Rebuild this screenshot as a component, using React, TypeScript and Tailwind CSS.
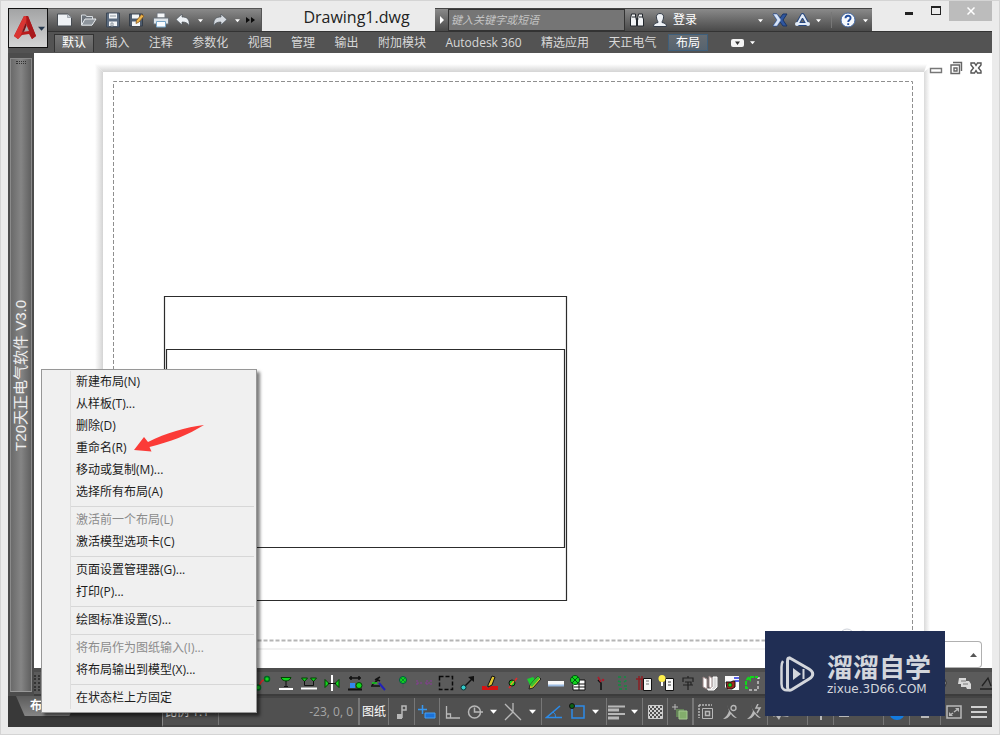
import React from 'react';

type Draw = { w?: number; h?: number; children: React.ReactNode; vb?: string };

function Svg({ w = 18, h = 18, vb, children }: Draw) {
  return (
    <svg width={w} height={h} viewBox={vb ?? `0 0 ${w} ${h}`} fill="none" className="block shrink-0" aria-hidden="true">
      {children}
    </svg>
  );
}

function Caret({ color = '#fff', size = 6 }: { color?: string; size?: number }) {
  return (
    <svg width={size} height={size} viewBox="0 0 6 6" className="block shrink-0" aria-hidden="true">
      <path d="M0 1.500h6L3 5z" fill={color} />
    </svg>
  );
}

const quick: { name: string; art: React.ReactNode }[] = [
  {
    name: '新建',
    art: (
      <>
        <path d="M1.500 3h10l4 3.500V15h-14z" fill="#eef1f4" stroke="#474c52" />
        <path d="M11.500 3v3.500h4" fill="#c5cbd2" stroke="#8a9098" strokeWidth=".7" />
      </>
    ),
  },
  {
    name: '打开',
    art: (
      <>
        <path d="M1.500 14V4h4l1 1.500h6V8" fill="#6c737b" stroke="#d8dde2" />
        <path d="M1.500 14.200 5 8h11l-4 6.200z" fill="#8e959c" stroke="#e7ebee" />
      </>
    ),
  },
  {
    name: '保存',
    art: (
      <>
        <path d="M2.500 2h13v14h-13z" fill="#5c6c80" stroke="#3c4754" />
        <path d="M5 2.500h8v5H5zM5 10.500h8V15H5z" fill="#f3f5f7" />
        <path d="M6 5h6M7 12h2v3H7z" stroke="#8c96a0" />
      </>
    ),
  },
  {
    name: '另存为',
    art: (
      <>
        <path d="M1.500 3h13v12h-13z" fill="#4e5c6e" stroke="#343d48" />
        <path d="M4 3.500h7v4H4zM4 10.500h8V15H4z" fill="#f3f5f7" />
        <path d="m8.500 9.500 5-6 2.500 1.500-5 6-3 1.500z" fill="#efb64b" stroke="#8c5b20" strokeWidth=".8" />
      </>
    ),
  },
  {
    name: '打印',
    art: (
      <>
        <path d="M5 2h8v5H5z" fill="#f6f8fa" stroke="#70777e" />
        <path d="M1.500 7h15v6h-15z" fill="#dfe5ea" stroke="#6b737b" />
        <path d="M4.500 10.500h9V16h-9z" fill="#fafcff" stroke="#77a5c7" />
      </>
    ),
  },
];

function AppMark() {
  return (
    <Svg w={24} h={28}>
      <path d="M11 2 1 22l4 3 4-4 7-1 3 5 4-3L15 2z" fill="#b91d1d" />
      <path d="M11 2h3l-1 6-6 15-2 2-4-3z" fill="#d93532" />
      <path d="M12.500 9 9 18l7-1z" fill="#a9a9aa" />
      <path d="M12.500 9 9 18l2-.3 2.500-6z" fill="#7c1013" />
      <path d="m13 2 4.500 20L19 25l4-3L15 2z" fill="#a8191c" />
    </Svg>
  );
}

const tabs = ['默认', '插入', '注释', '参数化', '视图', '管理', '输出', '附加模块', 'Autodesk 360', '精选应用', '天正电气', '布局'];

function Header() {
  return (
    <header className="flex bg-[#ebebeb]">
      <div className="flex flex-col pt-[7px]">
        <button aria-label="应用程序菜单" className="flex h-10 w-10 items-center justify-between border border-[#111] bg-linear-to-b from-[#a3a4a5] to-[#d4d4d4] pr-[2px] pl-1">
          <AppMark />
          <Caret color="#26384d" size={7} />
        </button>
        <div className="flex-1 bg-[#535353]" />
      </div>
      <div className="flex min-w-0 flex-1 flex-col">
        <div className="flex h-[30px] items-end">
          <div className="flex h-[23px] w-[214px] items-center gap-[6px] border-t border-r border-[#555] bg-linear-to-b from-[#8a8a8a] to-[#4a4a4a] pl-2">
            {quick.map((q) => (
              <button key={q.name} aria-label={q.name}>
                <Svg>{q.art}</Svg>
              </button>
            ))}
            <button aria-label="放弃" className="flex items-center gap-2">
              <Svg w={14} h={14}>
                <path d="M6 1v3c5 0 8 2 7 9-1-3-3-4-7-4v3L0 6.500z" fill="#edf1f5" stroke="#4d545c" strokeWidth=".7" />
              </Svg>
              <Caret size={5} />
            </button>
            <button aria-label="重做" className="ml-1 flex items-center gap-2">
              <Svg w={14} h={14}>
                <path d="M8 1v3C3 4 0 6 1 13c1-3 3-4 7-4v3l6-5.500z" fill="#d5dae0" stroke="#4d545c" strokeWidth=".7" />
              </Svg>
              <Caret size={5} />
            </button>
            <button aria-label="更多">
              <Svg w={9} h={8}>
                <path d="m0 1 4 3-4 3zM5 1l4 3-4 3z" fill="#0b0b0b" />
              </Svg>
            </button>
          </div>
          <h1 className="flex-1 pb-1 pl-4 text-center text-[16px] leading-5 text-[#222]">Drawing1.dwg</h1>
          <div className="flex h-[23px] w-[437px] border-t border-[#444] bg-linear-to-b from-[#8a8a8a] to-[#4a4a4a]">
            <button aria-label="展开搜索" className="flex w-[13px] items-center justify-center">
              <Svg w={4} h={8}>
                <path d="m0 0 4 4-4 4z" fill="#fff" />
              </Svg>
            </button>
            <input
              aria-label="搜索"
              placeholder="键入关键字或短语"
              className="w-[177px] border border-[#333] bg-[#757575] pl-[2px] text-[11px] italic text-white outline-none placeholder:text-[#c4c4c4]"
            />
            <button aria-label="查找" className="ml-1">
              <Svg w={16} h={16}>
                <path d="M2.500 2h4v3l1 2v7h-6V7zM9.500 2h4v3l1 2v7h-6V7z" fill="#f2f4f6" stroke="#22272d" />
                <path d="M6.500 7h3M3 5h3M10 5h3" stroke="#22272d" strokeWidth="1.200" />
              </Svg>
            </button>
            <button aria-label="登录" className="ml-[7px] flex items-center gap-[5px] text-[12px] text-white">
              <Svg w={16} h={16}>
                <path d="M8 1.500c3 0 4 2 3.500 4.500S10 9 10 10.500c3 .5 4.500 1.500 4.500 4h-13c0-2.500 1.500-3.500 4.500-4 0-1.500-1-2-1.500-4.500S5 1.500 8 1.500z" fill="#eef1f5" stroke="#363f4b" />
              </Svg>
              登录
            </button>
            <div className="ml-auto flex items-center">
              <Caret size={5} />
              <button aria-label="Exchange" className="ml-2">
                <Svg w={18} h={16}>
                  <path d="M2 2h4l3 4 3-4h4l-4 6 4 6h-4l-3-4-3 4H2l4-6z" fill="#2f569f" stroke="#1a3566" />
                  <path d="M2 2h4l4 6-4 6H2l4-6z" fill="#d7e4f8" stroke="#5474ab" strokeWidth=".6" />
                </Svg>
              </button>
              <button aria-label="Autodesk 360" className="ml-[5px]">
                <Svg w={17} h={16}>
                  <path d="m8.500 3 5 9h-10z" stroke="#27477f" strokeWidth="4" strokeLinejoin="round" />
                  <path d="m8.500 3 5 9h-10z" stroke="#e2ebf7" strokeWidth="2" strokeLinejoin="round" />
                  <circle cx="3" cy="12" r="2" fill="#e2ebf7" />
                  <circle cx="14" cy="12" r="2" fill="#e2ebf7" />
                </Svg>
              </button>
              <span className="ml-[5px]"><Caret size={5} /></span>
              <span className="ml-[10px] h-4 w-px bg-[#777]" />
              <button aria-label="帮助" className="ml-2">
                <Svg w={16} h={16}>
                  <circle cx="8" cy="8" r="7" fill="#f7f9fc" stroke="#41659f" />
                  <path d="M5.500 6.300C5.500 3 10.600 3 10.600 6c0 2-2.400 2-2.400 4M8.200 11.200v1.800" stroke="#244f9e" strokeWidth="1.900" />
                </Svg>
              </button>
              <span className="mr-1 ml-[7px]"><Caret size={5} /></span>
            </div>
          </div>
          <div className="flex self-start pl-[33px]">
            <button aria-label="最小化" className="flex h-[19px] w-[22px] items-end pb-[5px]">
              <span className="h-[3px] w-2 bg-[#222]" />
            </button>
            <button aria-label="最大化" className="flex h-[19px] w-[22px] items-center pl-1">
              <span className="h-[9px] w-[10px] border border-t-2 border-[#222]" />
            </button>
            <button aria-label="关闭" className="flex h-5 w-[43px] items-center justify-center bg-[#bcbcbc]">
              <Svg w={8} h={8}>
                <path d="m.5.5 7 7m0-7-7 7" stroke="#fff" strokeWidth="1.500" />
              </Svg>
            </button>
          </div>
        </div>
        <nav className="flex h-[22px] items-center border-t border-[#333] bg-[#535353] pl-[6px]">
          <div className="flex w-[654px] items-center justify-between">
            {tabs.map((t) => (
              <button
                key={t}
                className={
                  t === '默认'
                    ? 'h-[18px] border border-b-0 border-[#333] bg-linear-to-b from-[#767676] to-[#5e5e5e] px-[7px] text-[12px] leading-4 whitespace-nowrap text-white'
                    : t === '布局'
                      ? 'h-[17px] border border-[#3f5f7b] bg-linear-to-b from-[#666c72] to-[#56636f] px-[7px] text-[12px] leading-4 whitespace-nowrap text-white'
                      : 'h-[18px] px-2 text-[12px] leading-[18px] whitespace-nowrap text-[#d8d8d8]'
                }
              >
                {t}
              </button>
            ))}
          </div>
          <button aria-label="功能区显示" className="ml-[23px] flex items-center gap-[6px]">
            <Svg w={13} h={8}>
              <rect width="13" height="8" rx="2" fill="#f4f4f4" />
              <path d="M4 2.500h5L6.500 6z" fill="#333" />
            </Svg>
            <Caret size={5} />
          </button>
        </nav>
      </div>
    </header>
  );
}

function Palette() {
  return (
    <aside className="flex w-[26px] shrink-0 flex-col items-center bg-[#4c4c4c] px-[2px] pt-[5px] pb-1">
      <div className="flex w-full flex-1 flex-col items-center border border-[#8a8a8a] border-b-[#999] bg-linear-to-r from-[#6a6a6a] via-[#858585] to-[#606060]">
        <div className="mt-[2px] h-[3px] w-[10px] border-y border-dotted border-[#333]" />
        <div className="mt-[236px] rotate-180 font-['Liberation_Sans','Noto_Sans_CJK_SC',sans-serif] text-[15px] leading-5 whitespace-nowrap text-[#ededed] [text-orientation:sideways] [writing-mode:vertical-rl]">
          T20天正电气软件 V3.0
        </div>
      </div>
    </aside>
  );
}

function Canvas() {
  return (
    <main className="relative min-h-[615px] flex-1 overflow-hidden bg-white">
      <svg className="absolute inset-0 h-full w-full" fill="none" aria-label="布局图纸">
        <defs>
          <linearGradient id="top" x2="0" y2="1">
            <stop stopColor="#fff" />
            <stop offset="1" stopColor="#d4d4d4" />
          </linearGradient>
          <linearGradient id="left">
            <stop stopColor="#fff" />
            <stop offset="1" stopColor="#d4d4d4" />
          </linearGradient>
          <linearGradient id="right">
            <stop stopColor="#dadada" />
            <stop offset="1" stopColor="#fff" />
          </linearGradient>
        </defs>
        <path d="M61 11h832l-3 8H69z" fill="url(#top)" />
        <path d="M61 11l8 8v572l-8 5z" fill="url(#left)" />
        <path d="M890 19l6-5v576l-6 5z" fill="url(#right)" />
        <path d="M69 596h821" stroke="#f1f1f1" strokeWidth="2" />
        <path d="M79.500 587V28.500h799V587" stroke="#8f8f8f" strokeDasharray="4 2" />
        <path d="M79.500 587.500h799" stroke="#b5b5b5" strokeWidth="2" strokeDasharray="4 2" />
        <path d="M130.500 243.500h402v304h-402zM132.500 296.500h398v198h-398z" stroke="#2c2c2c" strokeWidth="1.200" />
        <circle cx="813" cy="583" r="7" stroke="#ccd0d8" />
        <circle cx="829" cy="585" r="7" stroke="#ccd0d8" />
      </svg>
      <div className="absolute top-2 right-[9px] flex items-center gap-[6px]">
        <button aria-label="最小化图形">
          <Svg w={14} h={14}>
            <path d="M1.500 7.500h11v4h-11z" fill="#fff" stroke="#777" strokeWidth="1.400" />
          </Svg>
        </button>
        <button aria-label="还原图形">
          <Svg w={14} h={14}>
            <path d="M4 1.500h8.500V10M2 4h8.500v8.500H2z" stroke="#666" strokeWidth="1.400" />
            <path d="M5 7h3v3H5z" stroke="#666" strokeWidth="1.400" />
          </Svg>
        </button>
        <button aria-label="关闭图形">
          <Svg w={14} h={14}>
            <path d="M2 2h3.500L7 4.500 8.500 2H12v2L9.500 7l2.500 3v2H8.500L7 9.500 5.500 12H2v-2l2.500-3L2 4z" fill="#fff" stroke="#555" strokeWidth="1.400" />
          </Svg>
        </button>
      </div>
      <div className="absolute right-[10px] bottom-0 left-[180px] flex h-[27px] items-center justify-end">
        <input aria-label="命令行" className="h-full flex-1 outline-none" />
        <div className="flex h-full w-14 items-center justify-end rounded-r-sm border border-l-0 border-[#b0b0b0] pr-1">
          <button aria-label="命令历史">
            <Svg w={7} h={4}>
              <path d="M0 4h7L3.500 0z" fill="#555" />
            </Svg>
          </button>
        </div>
      </div>
    </main>
  );
}

const G = '#12d61d';
const toolsA: React.ReactNode[] = [
  <>
    <path d="M5 12Q7 6 12 5" stroke="#d82020" strokeWidth="1.500" />
    <circle cx="4" cy="13.500" r="2.500" fill={G} stroke="#062" strokeWidth="1.500" />
    <circle cx="13" cy="5" r="2.500" fill={G} stroke="#062" strokeWidth="1.500" />
  </>,
  <>
    <path d="M4 3.500h10c-1 3-3 3-5 3.500-2-.5-4-.5-5-3.500z" fill={G} stroke="#040" />
    <path d="M9 7v5.500M7 12.500h4" stroke="#111" />
    <path d="M2 15h14" stroke="#fff" strokeWidth="2" />
  </>,
  <>
    <path d="M1.500 4h6L4.500 7.500zM10.500 4h6l-3 3.500z" fill={G} stroke="#040" />
    <path d="M4.500 7v4.500h9V7" stroke="#111" />
    <path d="M1 14.500h16" stroke="#fff" strokeWidth="2" />
  </>,
  <>
    <path d="M9 1v16" stroke="#fff" strokeWidth="2" />
    <path d="M2 5.500v8l4-4zM16 5.500v8l-4-4z" fill={G} stroke="#040" />
    <path d="M5 9.500h8" stroke="#111" />
  </>,
  <>
    <path d="M3 4h12M5 2v4m8-4v4" stroke="#111" strokeWidth="1.500" />
    <path d="M4 9h5v5H4z" fill="#38e" />
    <circle cx="13" cy="11.500" r="3" fill={G} stroke="#040" />
    <path d="M2 15.500h14" stroke="#111" strokeWidth="2" />
  </>,
  <>
    <path d="M2 12h9M3 11l6-5 2 1M6 6l5-3" stroke="#111" strokeWidth="1.500" />
    <path d="M3 9h5" stroke={G} strokeWidth="1.500" />
    <path d="m10 9 6 7" stroke="#2222b8" strokeWidth="2" />
  </>,
];

const toolsB: React.ReactNode[] = [
  <>
    <circle cx="10" cy="6" r="3.500" fill={G} stroke="#054" />
    <path d="m8 4 4 4m0-4-4 4" stroke="#063" strokeWidth=".7" />
    <path d="M10 10v4" stroke="#555" />
  </>,
  <path d="M2 6v6m0-3h5m3 0h6m-4-3v6m4-6v6" stroke="#8a3a98" strokeDasharray="2 1" />,
  <path d="M2.500 2.500h13v13h-13z" stroke="#090909" strokeWidth="1.500" strokeDasharray="4 2" />,
  <>
    <path d="M5 13 14 4" stroke="#111" strokeWidth="1.500" />
    <path d="M15 2v6l-6-5z" fill="#111" />
    <circle cx="4.500" cy="13.500" r="2.500" fill="#3cc" stroke="#133" />
  </>,
  <>
    <path d="M1 12h4l2 2 3-2h7v4H1z" fill="#d61212" />
    <path d="m7 11 4-9 3 1-3 8-4 2z" fill="#dfc42f" stroke="#111" />
  </>,
  <>
    <path d="M6 14 14 4" stroke="#e52a2a" strokeWidth="1.500" />
    <circle cx="9" cy="9" r="3" stroke="#111" fill={G} />
    <path d="M7.500 11 11 7" stroke="#e5a02a" strokeWidth="1.500" />
  </>,
  <>
    <path d="m2 5 6-2 4 5-6 5z" fill="#1bd030" />
    <path d="m4 15 1-4 8-9 3 3-8 9z" fill="#d8c626" stroke="#222" />
    <path d="m5 11 8-9 2 2-8 9z" fill="#39c431" />
  </>,
  <>
    <path d="M1 7h16v5H1z" fill="#f8f8f8" />
    <path d="M1 11.500h16" stroke="#9cbbe0" strokeWidth="2" />
  </>,
  <>
    <path d="M5 6h11v10H4v-5" fill="#fff" stroke="#111" />
    <path d="M5 10h11M5 13h11M10 7v9" stroke="#111" />
    <circle cx="6" cy="6" r="4.500" fill={G} stroke="#051" />
    <path d="m3 3 6 6m0-6L3 9" stroke="#051" />
  </>,
  <>
    <path d="M10 16V9l-3-3" stroke="#111" strokeWidth="1.500" />
    <path d="m7 3 3 5" stroke="#ac1d2d" strokeWidth="1.500" />
    <circle cx="12" cy="6" r="1.300" fill="#ac1d2d" />
  </>,
  <path d="M5 3h4m2 0h2M5 7l3 1m3 0 3-2M5 11h4m2 1h3M6 15h3m3 0h2" stroke="#138b42" strokeWidth="1.500" strokeDasharray="3 1" />,
  <>
    <path d="M1 5h7M4 2v14M7 2v14" stroke="#8c1f25" strokeWidth="1.500" />
    <path d="M8.500 4.500h8v12h-8z" fill="#f7f7f7" stroke="#111" />
    <path d="M11 7h3M11 10h3" stroke="#777" />
  </>,
  <>
    <path d="M8.500 4.500h8v12h-8z" fill="#f7f7f7" stroke="#111" />
    <path d="M11 8h3M11 11h3" stroke="#777" strokeWidth="1.500" />
    <circle cx="5" cy="4.500" r="3.500" fill="#ffef4b" />
    <path d="M4 8h2v4H4z" fill="#fff" />
  </>,
  <path d="M9 2v2M4 8V4h10v4M6 8h6v3H4m0 0h10M9 8v8" stroke="#222" strokeWidth="1.200" />,
  <>
    <path d="m2 3 4 2v10l-4-2zM8 2l3 2v11l-3-2z" fill="#fff" stroke="#9b8585" />
    <path d="M6 15h4l2-2V3h4v10l-3 3H7" fill="#dadada" stroke="#fff" />
  </>,
  <>
    <path d="M2 2h14v14H5l-3-3z" fill="#fafafa" />
    <path d="M3 8h5l2-1h2v6l-3 2H4z" fill="#a3261e" stroke="#111" />
    <circle cx="7" cy="11" r="2" fill={G} stroke="#111" strokeWidth=".5" />
    <path d="M11 4h5m-4 3h4" stroke="#2630e0" strokeWidth="1.500" />
  </>,
  <>
    <path d="M3 14H1V7l3-4h9" stroke={G} strokeWidth="2" strokeDasharray="4 1" />
    <path d="M4 16h9V4h3" stroke="#fff" strokeDasharray="3 2" />
    <path d="m3 5 3-3v6z" fill={G} />
  </>,
];

function Tools({ items, gap, name }: { items: React.ReactNode[]; gap: boolean; name: string }) {
  return (
    <div className={gap ? 'flex gap-[5px]' : 'flex gap-1'}>
      {items.map((art, i) => (
        <button key={i} aria-label={`${name} ${i + 1}`}>
          <Svg>{art}</Svg>
        </button>
      ))}
    </div>
  );
}

function Toolbar() {
  return (
    <div className="flex h-[28px] items-center overflow-hidden border-t-4 border-b-2 border-t-[#4d4d4d] border-b-[#3c3c3c] bg-[#5b5b5b]">
      <div className="h-4 w-[6px] shrink-0 border-x-2 border-dotted border-[#333]" />
      <div className="ml-[214px]">
        <Tools items={toolsA} gap name="导线" />
      </div>
      <div className="ml-[6px]">
        <Tools items={toolsB} gap={false} name="设备" />
      </div>
      <div className="ml-auto flex items-center gap-2">
        <Svg w={14} h={16}>
          <circle cx="6" cy="8" r="6" fill="#fff" stroke="#222" />
        </Svg>
        <Svg w={16} h={16}>
          <path d="M3 3h7v3h3l2 3v5h-4l-1-2H5V9H2z" fill="#d8d8d8" />
          <path d="M5 6h5M7 9h5" stroke="#777" />
        </Svg>
        <Svg w={12} h={16}>
          <path d="M2 11 8 3l3 8M0 14h12" stroke="#222" strokeWidth="1.300" />
        </Svg>
      </div>
    </div>
  );
}

function Cell({ children, className }: { children: React.ReactNode; className: string }) {
  return <div className={`flex items-center border-r border-[#777] ${className}`}>{children}</div>;
}

const grey = '#b8b8b8';

function StatusBar() {
  return (
    <footer className="flex h-[31px] shrink-0 bg-[#393939]">
      <div className="flex w-[154px] shrink-0 items-start pl-2">
        <button className="h-5 w-[62px] bg-linear-to-b from-[#5c5c5c] to-[#858585] pl-[14px] text-left text-[12px] leading-5 font-bold whitespace-nowrap text-white [clip-path:polygon(0_0,100%_0,86%_100%,14%_100%)]">
          布局1
        </button>
      </div>
      <div className="flex min-w-0 flex-1 overflow-hidden border-y-2 border-l border-[#444] border-l-[#888] bg-[#505050] text-[12px] text-[#eee]">
        <Cell className="w-14 shrink-0 gap-1 pl-[2px] whitespace-nowrap">比例 1:1 <Caret size={5} /></Cell>
        <Cell className="min-w-0 flex-1 justify-end pr-[5px] whitespace-nowrap text-[#a6a6a6]">-23, 0, 0</Cell>
        <Cell className="w-[30px] shrink-0 justify-center border-l text-white">
          <button className="whitespace-nowrap">图纸</button>
        </Cell>
        <Cell className="w-[26px] shrink-0 justify-center">
          <Svg w={12} h={16}>
            <path d="M1 10h5v5H1z" fill={grey} />
            <path d="M6 14V2h4v4H6" stroke={grey} strokeWidth="1.500" />
          </Svg>
        </Cell>
        <Cell className="w-[25px] shrink-0 justify-center">
          <Svg w={18} h={16}>
            <path d="M4.500 1v9M0 5.500h9" stroke="#3696ee" strokeWidth="1.500" />
            <path d="M7 9h10v5H7z" fill="#1c72d8" stroke="#45a0f5" />
          </Svg>
        </Cell>
        <Cell className="w-[102px] shrink-0 justify-between pr-[5px] pl-[5px]">
          <Svg w={15} h={16}>
            <path d="M1.500 2v12H15M1.500 10h4v4" stroke={grey} strokeWidth="1.300" />
          </Svg>
          <Svg w={16} h={16}>
            <circle cx="7.500" cy="8" r="6" stroke={grey} strokeWidth="1.500" />
            <path d="M7.500 3.500V8H16" stroke={grey} strokeWidth="1.500" />
          </Svg>
          <Caret size={7} />
          <Svg w={18} h={18}>
            <path d="m1 1 16 16M9 0v9M9 9l-8 8" stroke={grey} strokeWidth="1.300" />
          </Svg>
          <Caret size={7} />
        </Cell>
        <Cell className="w-[65px] shrink-0 justify-between pr-[7px] pl-[3px]">
          <Svg w={17} h={16}>
            <path d="M15 2 1.500 13.500H17" stroke="#2c8be8" strokeWidth="1.600" />
            <path d="M8 8q3 2 2.500 5" stroke="#2c8be8" />
          </Svg>
          <Svg w={17} h={17}>
            <path d="M3 3h12v12H3z" stroke="#2c8be8" strokeWidth="1.500" />
            <circle cx="3" cy="3" r="2.500" fill="#0b6314" stroke="#111" />
          </Svg>
          <Caret size={7} />
        </Cell>
        <Cell className="w-9 shrink-0 justify-between pr-1 pl-px">
          <Svg w={17} h={16}>
            <path d="M0 2.500h17M0 10h17" stroke={grey} strokeWidth="2" />
            <path d="M0 6h11M0 14h11" stroke={grey} strokeWidth="3" />
          </Svg>
          <Caret size={7} />
        </Cell>
        <Cell className="w-[25px] shrink-0 justify-center">
          <Svg w={15} h={16}>
            <defs>
              <pattern id="chk" width="4" height="4" patternUnits="userSpaceOnUse">
                <path d="M0 0h2v2H0zM2 2h2v2H2z" fill="#d0d0d0" />
              </pattern>
            </defs>
            <path d="M.5 1.500h14v13H.5z" fill="url(#chk)" stroke="#ccc" />
          </Svg>
        </Cell>
        <Cell className="w-[25px] shrink-0 justify-center">
          <Svg w={16} h={16}>
            <path d="M3 0v6M0 3h6" stroke={grey} />
            <path d="M4 5h8v8H4z" fill="#648458" />
            <path d="M7 7h8v8H7z" fill="#83ad6c" stroke="#a5c990" />
          </Svg>
        </Cell>
        <Cell className="w-[75px] shrink-0 justify-between border-l pr-[5px] pl-1">
          <Svg w={16} h={16}>
            <path d="M1 1h13M1 1v13" stroke={grey} strokeWidth="1.500" strokeDasharray="2 1" />
            <path d="M4.500 4.500h10v10h-10z" stroke={grey} />
            <path d="M7.500 7.500h4v4h-4z" stroke={grey} strokeWidth="1.500" />
          </Svg>
          <Svg w={16} h={16}>
            <path d="M5 1c1 4 3 7 10 13-3 0-5-2-6-4-2 3-4 5-8 5 3-2 5-5 6-8z" fill={grey} />
            <circle cx="11.500" cy="4" r="2.500" stroke={grey} strokeWidth="1.300" />
          </Svg>
          <Svg w={16} h={16}>
            <path d="M5 1c1 4 3 7 10 13-3 0-5-2-6-4-2 3-4 5-8 5 3-2 5-5 6-8z" fill={grey} />
            <path d="m12 0-2 4h4l-3 5" stroke={grey} strokeWidth="1.500" />
          </Svg>
        </Cell>
        <Cell className="w-[40px] shrink-0 pl-1">
          <Svg w={18} h={18}>
            <path d="m8 1 1 7 8 6-8-1-2 4-3-4-3 1z" fill={grey} />
          </Svg>
        </Cell>
        <Cell className="w-[26px] shrink-0 justify-center">
          <Svg w={12} h={16}>
            <path d="M6 0v16M0 8h12" stroke={grey} strokeWidth="2" />
          </Svg>
        </Cell>
        <Cell className="w-[50px] shrink-0 justify-around">
          <Svg w={10} h={14}><path d="M1 1h8v10H1z" stroke={grey} strokeWidth="2" /></Svg>
          <Svg w={20} h={14}><path d="M1 4h4v7H1zM8 2h5v9H8zM16 6h3v5h-3z" fill={grey} /></Svg>
        </Cell>
        <Cell className="w-[26px] shrink-0 justify-center">
          <Svg w={18} h={18}><circle cx="9" cy="9" r="8" fill="#137be0" /></Svg>
        </Cell>
        <Cell className="w-[31px] shrink-0 justify-center">
          <Svg w={14} h={16}><path d="M4 8v6m5-6v6M3 13h8" stroke={grey} strokeWidth="2" /></Svg>
        </Cell>
        <div className="flex w-[51px] shrink-0 items-center justify-between pr-[5px] pl-[5px]">
          <Svg w={16} h={14}>
            <path d="M1 1h14v12H1z" stroke={grey} strokeWidth="1.500" />
            <path d="M9 3h4v4zM3 7v4h4z" fill={grey} />
            <path d="m8 7 4-3M4 10l3-2" stroke={grey} strokeWidth="1.500" />
          </Svg>
          <Svg w={16} h={14}>
            <path d="M0 2h16M0 7h16M0 12h16" stroke="#d0d0d0" strokeWidth="2" />
          </Svg>
        </div>
      </div>
    </footer>
  );
}

const menu: { label: string; off?: boolean }[][] = [
  [{ label: '新建布局(N)' }, { label: '从样板(T)...' }, { label: '删除(D)' }, { label: '重命名(R)' }, { label: '移动或复制(M)...' }, { label: '选择所有布局(A)' }],
  [{ label: '激活前一个布局(L)', off: true }, { label: '激活模型选项卡(C)' }],
  [{ label: '页面设置管理器(G)...' }, { label: '打印(P)...' }],
  [{ label: '绘图标准设置(S)...' }],
  [{ label: '将布局作为图纸输入(I)...', off: true }, { label: '将布局输出到模型(X)...' }],
  [{ label: '在状态栏上方固定' }],
];

function ContextMenu() {
  return (
    <div role="menu" className="absolute top-[368px] left-[40px] w-[216px] border border-[#979797] bg-[#f0f0f0] pt-px pr-[2px] pb-[3px] pl-7 shadow-[3px_3px_3px_rgba(0,0,0,0.5)]">
      <div className="border-l border-[#dedede]">
        {menu.map((group, i) => (
          <div key={i} className={i ? 'mt-[3px] border-t border-[#d7d7d7] pt-[2px]' : ''}>
            {group.map((m) => (
              <button
                key={m.label}
                role="menuitem"
                disabled={m.off}
                className="block h-[22px] w-full pl-[5px] text-left text-[12px] leading-[22px] whitespace-nowrap text-[#1c1c1c] disabled:text-[#8c8c8c]"
              >
                {m.label}
              </button>
            ))}
          </div>
        ))}
      </div>
      <svg className="absolute top-[55px] left-[92px]" width="72" height="30" viewBox="0 0 72 30" aria-hidden="true">
        <path d="M0 25 10 12l4 5C32 8 52 2 70 0 54 10 36 17 15.500 22l2 4.500z" fill="#fb3b37" />
      </svg>
    </div>
  );
}

function Watermark() {
  return (
    <div className="absolute right-[54px] bottom-[18px] flex h-[85px] w-[180px] items-center bg-[#202e54] pl-[14px] text-[#d3d6dc]">
      <Svg w={36} h={38}>
        <path d="M10 2.500 30 14c5 3 5 7 0 10L13 34.500c-3 1.500-4.500.5-4.500-2.500V6.500C8.500 3.500 9 2 12 3.500" stroke="currentColor" strokeWidth="3" />
        <path d="M4 6C2.500 8 2.500 10 2.500 12v17c0 5 3 7 7 6" stroke="currentColor" strokeWidth="2.500" />
        <path d="m14 13 8 6-8 6zM23.500 14h2v10h-2z" fill="currentColor" />
      </Svg>
      <div className="ml-3 flex flex-col gap-1 font-['DejaVu_Sans','Noto_Sans_CJK_SC',sans-serif] whitespace-nowrap">
        <div className="font-['Noto_Sans_CJK_SC',sans-serif] text-[26px] leading-[26px] font-bold">溜溜自学</div>
        <div className="text-[12px] leading-3">zixue.3D66.COM</div>
      </div>
    </div>
  );
}

export default function App() {
  return (
    <div className="relative flex min-h-screen flex-col border border-[#d4d4d4] bg-[#ebebeb] px-[7px] pb-[7px] font-['Open_Sans','Noto_Sans_CJK_SC',sans-serif]">
      <Header />
      <div className="flex flex-1">
        <Palette />
        <div className="flex min-w-0 flex-1 flex-col">
          <Canvas />
          <Toolbar />
        </div>
      </div>
      <StatusBar />
      <ContextMenu />
      <Watermark />
    </div>
  );
}
